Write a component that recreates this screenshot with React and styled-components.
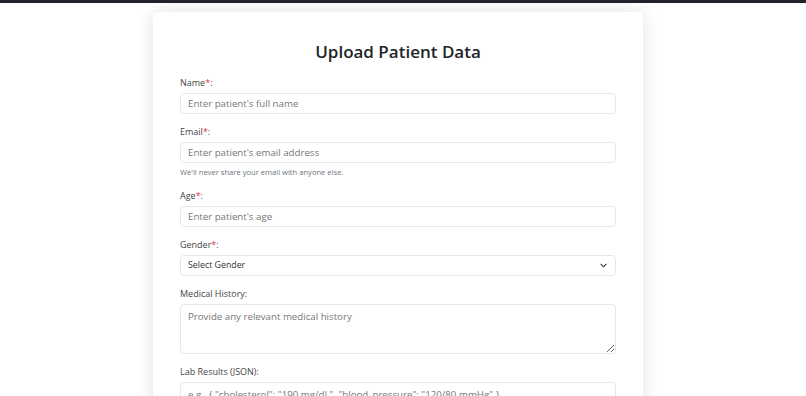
import React, { useState } from 'react';
import styled, { createGlobalStyle } from 'styled-components';

const GlobalStyle = createGlobalStyle`
  * { box-sizing: border-box; }
  body {
    margin: 0;
    background: #ffffff;
    font-family: "Open Sans", "Noto Sans", Arial, sans-serif;
    color: #333;
  }
`;

const TopBar = styled.div`
  height: 3px;
  background-color: #212529;
`;

const Page = styled.div`
  display: flex;
  justify-content: center;
  padding: 9px 10px 40px 0;
`;

const Card = styled.form`
  width: 490px;
  background: #fff;
  border-radius: 5px;
  padding: 29px 27px 30px;
  box-shadow: 0 0 18px rgba(0, 0, 0, 0.12);
`;

const Title = styled.h2`
  margin: 0 0 12px;
  height: 22px;
  text-align: center;
  font-size: 17px;
  line-height: 22px;
  font-weight: 600;
  color: #212529;
`;

const Field = styled.div`
  margin-bottom: 10px;
`;

const Label = styled.label`
  display: block;
  height: 15px;
  font-size: 9px;
  line-height: 15px;
  margin-bottom: 3px;
  color: #444;
`;

const Required = styled.span`
  color: #dc3545;
`;

const inputBase = `
  display: block;
  width: 100%;
  margin: 0;
  border: 1px solid #e6e6e6;
  border-radius: 4px;
  background: #fff;
  font-family: "Open Sans", "Noto Sans", Arial, sans-serif;
  font-size: 9.7px;
  line-height: 13px;
  color: #333;
  padding: 0 7px;
  outline: none;
  &::placeholder { color: #777; }
`;

const Input = styled.input`
  ${inputBase}
  height: 21px;
`;

const TextArea = styled.textarea`
  ${inputBase}
  height: ${(p) => p.$h || 50}px;
  padding: 5px 7px;
  resize: vertical;
`;

const SelectWrap = styled.div`
  position: relative;
`;

const Select = styled.select`
  ${inputBase}
  height: 21px;
  font-size: 8.8px;
  appearance: none;
  -webkit-appearance: none;
  color: #333;
`;

const Chevron = styled.svg`
  position: absolute;
  right: 9px;
  top: 7px;
  width: 7px;
  height: 7px;
  pointer-events: none;
`;

const Help = styled.div`
  margin-top: 3px;
  height: 12px;
  font-size: 7.6px;
  line-height: 12px;
  color: #6c757d;
`;

const SubmitButton = styled.button`
  width: 100%;
  height: 26px;
  border: none;
  border-radius: 4px;
  background: #0d6efd;
  color: #fff;
  font-size: 10px;
  font-family: inherit;
`;

const App = () => {
  const [gender, setGender] = useState('');

  return (
    <>
      <GlobalStyle />
      <TopBar />
      <Page>
        <Card onSubmit={(e) => e.preventDefault()}>
          <Title>Upload Patient Data</Title>

          <Field>
            <Label>
              Name<Required>*</Required>:
            </Label>
            <Input placeholder="Enter patient's full name" />
          </Field>

          <Field>
            <Label>
              Email<Required>*</Required>:
            </Label>
            <Input placeholder="Enter patient's email address" />
            <Help>We'll never share your email with anyone else.</Help>
          </Field>

          <Field>
            <Label>
              Age<Required>*</Required>:
            </Label>
            <Input placeholder="Enter patient's age" />
          </Field>

          <Field>
            <Label>
              Gender<Required>*</Required>:
            </Label>
            <SelectWrap>
              <Select value={gender} onChange={(e) => setGender(e.target.value)}>
                <option value="">Select Gender</option>
                <option value="male">Male</option>
                <option value="female">Female</option>
                <option value="other">Other</option>
              </Select>
              <Chevron viewBox="0 0 16 16">
                <path d="M2 5l6 6 6-6" fill="none" stroke="#343a40" strokeWidth="2.4" strokeLinecap="round" strokeLinejoin="round" />
              </Chevron>
            </SelectWrap>
          </Field>

          <Field>
            <Label>Medical History:</Label>
            <TextArea placeholder="Provide any relevant medical history" />
          </Field>

          <Field>
            <Label>Lab Results (JSON):</Label>
            <TextArea $h={60} placeholder='e.g., { "cholesterol": "190 mg/dL", "blood_pressure": "120/80 mmHg" }' />
          </Field>

          <SubmitButton type="submit">Upload</SubmitButton>
        </Card>
      </Page>
    </>
  );
};

export default App;
